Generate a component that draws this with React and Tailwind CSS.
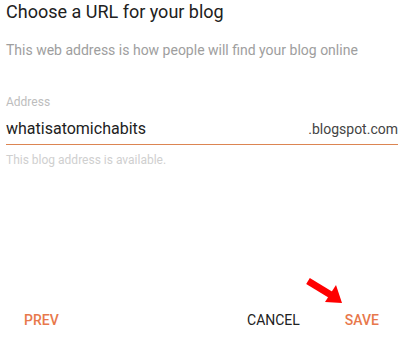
export default function App() {
  return (
    <div className="w-[400px] h-[337px] bg-white flex flex-col font-['Roboto',sans-serif] relative overflow-hidden">
      <h1 className="pl-[6px] pt-[1px] text-[18px] leading-[22px] text-[#212121]">Choose a URL for your blog</h1>
      <p className="pl-[6px] mt-[17px] text-[14px] leading-[20px] text-[#9e9e9e]">
        This web address is how people will find your blog online
      </p>

      <div className="mt-[34px] pl-[6px] pr-[2px]">
        <label className="block text-[12px] leading-[16px] text-[#bdbdbd]">Address</label>
        <div className="mt-[8px] flex items-end justify-between border-b border-[#dc8552] pb-[4px]">
          <span className="text-[16px] leading-[22px] text-[#212121]">whatisatomichabits</span>
          <span className="text-[14px] leading-[22px] text-[#444]">.blogspot.com</span>
        </div>
        <p className="mt-[8px] text-[12px] leading-[15px] text-[#cfcfcf]">This blog address is available.</p>
      </div>

      <div className="mt-auto mb-[5px] flex items-center h-[24px]">
        <button className="ml-[24px] text-[14px] font-medium text-[#e8784b]">PREV</button>
        <div className="flex-1" />
        <button className="text-[14px] text-[#212121]">CANCEL</button>
        <button className="ml-[45px] mr-[21px] text-[14px] font-medium text-[#e8784b]">SAVE</button>
      </div>

      <svg className="absolute left-[305px] top-[275px]" width="40" height="32" viewBox="0 0 40 32">
        <path d="M3 6 L26 20" stroke="#ff0000" strokeWidth="7" strokeLinecap="butt" />
        <polygon points="20,27 31,10 37,28" fill="#ff0000" />
      </svg>
    </div>
  );
}
